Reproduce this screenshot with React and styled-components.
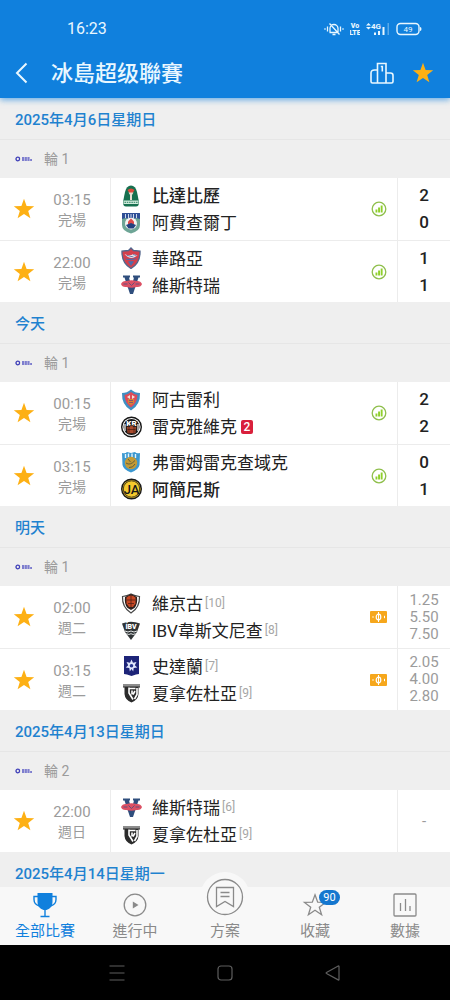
import React from "react";
import styled, { createGlobalStyle } from "styled-components";

const BLUE = "#1080dd";
const LINK = "#1f82cf";
const STAR = "#fdb014";
const GREY = "#9b9b9b";
const FONT = `Roboto, "Noto Sans CJK TC", "Noto Sans CJK SC", sans-serif`;

const GlobalStyle = createGlobalStyle`
  *, *::before, *::after { box-sizing: border-box; }
  body { margin: 0; background: #efefef; font-family: ${FONT}; color: #222; }
  h1, h2, p, ul { margin: 0; padding: 0; }
  ul { list-style: none; }
  svg { display: block; flex: none; }
  button { font: inherit; color: inherit; background: none; border: 0; padding: 0; cursor: pointer; }
`;

const Page = styled.div`
  display: flex;
  flex-direction: column;
  height: 100vh;
`;

/* ---------- header ---------- */

const Header = styled.header`
  position: relative;
  z-index: 1;
  flex: none;
  background: ${BLUE};
  color: #e9f7ff;
  box-shadow: 0 2px 6px rgba(16, 128, 221, 0.6);
`;

const StatusBar = styled.div`
  display: flex;
  align-items: center;
  justify-content: space-between;
  height: 48px;
  padding: 10px 28px 0 67px;
  font-size: 16px;
  line-height: 20px;
`;

const StatusIcons = styled.div`
  display: flex;
  align-items: center;
  gap: 6px;
`;

const TitleBar = styled.div`
  display: flex;
  align-items: center;
  height: 50px;
  padding: 0 16px 0 14px;
`;

const BackButton = styled.button`
  width: 37px;
`;

const Title = styled.h1`
  flex: 1;
  padding-top: 2px;
  font-size: 22px;
  line-height: 32px;
  font-weight: 500;
`;

const HeaderActions = styled.div`
  display: flex;
  align-items: center;
  gap: 18px;
`;

/* ---------- match list ---------- */

const List = styled.main`
  flex: 1;
  min-height: 0;
  overflow-y: auto;
  scrollbar-width: none;
`;

const DateHeading = styled.h2`
  height: 42px;
  padding-left: 15px;
  border-bottom: 1px solid #e6e6e6;
  background: #efefef;
  color: ${LINK};
  font-size: 15px;
  line-height: 44px;
  font-weight: 500;
`;

const Round = styled.p`
  display: flex;
  align-items: center;
  gap: 11px;
  height: 38px;
  padding-left: 15px;
  background: #efefef;
  color: ${GREY};
  font-size: 14px;
  line-height: 20px;
`;

const MatchRow = styled.li`
  display: flex;
  height: 62px;
  background: #fff;

  & + & {
    border-top: 1px solid #ececec;
  }
`;

const StarButton = styled.button`
  display: flex;
  align-items: center;
  justify-content: center;
  width: 48px;
`;

const Kickoff = styled.div`
  display: flex;
  flex-direction: column;
  align-items: center;
  justify-content: center;
  width: 48px;
  margin-right: 14px;
  padding-top: 2px;
  color: ${GREY};
  font-size: 15px;
  line-height: 20px;
`;

const KickoffState = styled.span`
  font-size: 14px;
  line-height: 20px;
`;

const Teams = styled.div`
  flex: 1;
  display: flex;
  flex-direction: column;
  justify-content: center;
  padding-left: 10px;
  border-left: 1px solid #ececec;
`;

const Team = styled.div`
  display: flex;
  align-items: center;
  height: 27px;
  color: #222;
  font-size: 17px;
  line-height: 25px;
  font-weight: ${(p) => (p.$winner ? 500 : 400)};
  white-space: nowrap;
`;

const TeamName = styled.span`
  padding: 2px 0 0 9px;
`;

const Rank = styled.span`
  padding-left: 2px;
  color: #a6a6a6;
  font-size: 12px;
`;

const RedCard = styled.span`
  width: 12px;
  height: 14px;
  margin-left: 4px;
  border-radius: 2px;
  background: #d9203c;
  color: #fff;
  font-size: 12px;
  line-height: 14px;
  font-weight: 500;
  text-align: center;
`;

const InfoButton = styled.button`
  display: flex;
  align-items: center;
  justify-content: center;
  width: 36px;
`;

const Result = styled.div`
  display: flex;
  flex-direction: column;
  align-items: center;
  justify-content: center;
  width: 53px;
  border-left: 1px solid #ececec;
  color: ${(p) => (p.$odds ? GREY : "#222")};
  font-size: ${(p) => (p.$odds ? 15 : 17)}px;
  line-height: ${(p) => (p.$odds ? 17 : 27)}px;
  font-weight: ${(p) => (p.$odds ? 400 : 500)};
`;

/* ---------- bottom bars ---------- */

const TabBar = styled.nav`
  position: relative;
  z-index: 1;
  flex: none;
  display: grid;
  grid-template-columns: repeat(5, 1fr);
  grid-template-rows: 58px;
  background: #f8f8f8;
`;

const Tab = styled.a`
  display: flex;
  flex-direction: column;
  align-items: center;
  justify-content: flex-end;
  gap: 2px;
  padding-bottom: 3px;
  color: ${(p) => (p.$active ? BLUE : "#8a8a8a")};
  font-size: 15px;
  line-height: 22px;
  text-decoration: none;
`;

const TabIcon = styled.span`
  position: relative;
  display: block;
`;

const RaisedIcon = styled.span`
  display: block;
  margin-bottom: -4px;
  padding: 6px;
  border-radius: 50%;
  background: #f8f8f8;
`;

const Badge = styled.span`
  position: absolute;
  left: 17px;
  top: -2px;
  width: 21px;
  height: 15px;
  border-radius: 8px;
  background: #1577cf;
  color: #fff;
  font-size: 11px;
  line-height: 15px;
  text-align: center;
`;

const SystemBar = styled.div`
  flex: none;
  display: flex;
  align-items: center;
  justify-content: center;
  gap: 86px;
  height: 55px;
  background: #000;
  color: #5e5e5e;
`;

/* ---------- icons ---------- */

const StarIcon = ({ size = 22, fill = STAR }) => (
  <svg width={size} height={size} viewBox="0 0 22 22">
    <path
      d="M11 .8l2.6 7.2 7.6.2-6 4.7 2.2 7.4L11 16l-6.4 4.3 2.2-7.4-6-4.7 7.6-.2z"
      fill={fill}
    />
  </svg>
);

const BackIcon = () => (
  <svg width="16" height="22" viewBox="0 0 16 22" fill="none" stroke="currentColor" strokeWidth="2">
    <path d="M12.5 1.5L3 11l9.500 9.500" />
  </svg>
);

const PodiumIcon = () => (
  <svg width="24" height="22" viewBox="0 0 24 22" fill="none" stroke="currentColor" strokeWidth="1.600">
    <path d="M7.500 21V1.500h8.500V21M7.500 8H4.500Q1 8 1 11v8.500q0 1.500 1.500 1.500h19q1.500 0 1.500-1.500v-6q0-2.500-2.500-2.500H16M10.800 4.500h1.500v5" />
  </svg>
);

const MutedBellIcon = () => (
  <svg width="20" height="14" viewBox="0 0 20 14" fill="none" stroke="currentColor" strokeWidth="1.300">
    <path d="M6 10.500V6.500a4 4 0 0 1 8 0v4H5.500M8.500 12.500h3M5.500 1.500l10 11M3.500 4.500v5M16.500 4.500v5M1 6.300v1.400M19 6.300v1.400" />
  </svg>
);

const VolteIcon = () => (
  <svg width="10" height="14" viewBox="0 0 10 14" fill="currentColor" fontFamily="Roboto, sans-serif" fontWeight="900">
    <text x="5" y="6" fontSize="7" textAnchor="middle">Vo</text>
    <text x="5" y="13" fontSize="7" textAnchor="middle">LTE</text>
  </svg>
);

const SignalIcon = () => (
  <svg width="24" height="14" viewBox="0 0 24 14" fill="currentColor">
    <path d="M0 3.500L2.500 1 5 3.500zM0 5l2.500 2.500L5 5z" />
    <text x="5" y="7" fontSize="8" fontWeight="700" fontFamily="Roboto, sans-serif">4G</text>
    <path d="M8 10.500h2V13H8zM12 9h2v4h-2zM16.500 5h2v8h-2z" />
    <path d="M21.500 1H23v12h-1.500z" opacity=".35" />
  </svg>
);

const BatteryIcon = () => (
  <svg width="26" height="14" viewBox="0 0 26 14">
    <rect x="1" y="1.500" width="22" height="11" rx="3.500" fill="none" stroke="currentColor" strokeWidth="1.400" />
    <path d="M24 5q1.500 0 1.500 2T24 9z" fill="currentColor" />
    <text x="12" y="10" fontSize="8" textAnchor="middle" fill="currentColor" fontFamily="Roboto, sans-serif">49</text>
  </svg>
);

const LeagueLogo = () => (
  <svg width="18" height="6" viewBox="0 0 18 6">
    <circle cx="2.800" cy="3" r="1.800" fill="none" stroke="#3f3fb8" strokeWidth="1.300" />
    <path d="M7 2h8M7 4h10" stroke="#5a5ac4" strokeWidth="1.400" strokeDasharray="2.200 .5" />
  </svg>
);

const StatsIcon = () => (
  <svg width="16" height="16" viewBox="0 0 16 16">
    <circle cx="8" cy="8" r="6.800" fill="none" stroke="#8fbf4c" strokeWidth="1.300" />
    <path d="M4.500 8.500h1.900v3H4.500zM7.100 6.500H9v5H7.100zM9.700 4.500h1.900v7H9.700z" fill="#8fd02c" />
  </svg>
);

const TicketIcon = () => (
  <svg width="18" height="12" viewBox="0 0 18 12">
    <rect x="0" y="0" width="17" height="12" rx="1" fill="#f6a71c" />
    <ellipse cx="8.500" cy="6" rx="2.300" ry="2.800" fill="none" stroke="#fff" strokeWidth="1.200" />
    <path d="M8.500 1v10M3 5.200v1.600M14.500 4.800v2.400" stroke="#fff" strokeWidth="1" />
  </svg>
);

const TrophyIcon = () => (
  <svg width="26" height="26" viewBox="0 0 26 26" fill="none" stroke="currentColor">
    <path d="M5.500 1h15v9q0 6-6 8h-3q-6-2-6-8z" fill="currentColor" stroke="none" />
    <path d="M6 4.500H2v3q0 5 5.500 6.500M20 4.500h4v3q0 5-5.500 6.500M13 17v7M8.500 24.500h9" strokeWidth="1.400" />
  </svg>
);

const LiveIcon = () => (
  <svg width="26" height="26" viewBox="0 0 26 26">
    <circle cx="13" cy="13" r="10.800" fill="none" stroke="currentColor" strokeWidth="1.300" />
    <path d="M10.800 9.500l5.700 3.500-5.700 3.500z" fill="currentColor" />
  </svg>
);

const PlanIcon = () => (
  <svg width="38" height="38" viewBox="0 0 38 38" fill="none" stroke="currentColor" strokeWidth="1.300">
    <circle cx="19" cy="19" r="17.500" />
    <path d="M10.500 9.500h17v19l-8.500-5-8.500 5zM14.500 14.500h9M14.500 18.500h9" />
  </svg>
);

const OutlineStarIcon = () => (
  <svg width="26" height="26" viewBox="0 0 26 26" fill="none" stroke="currentColor" strokeWidth="1.300">
    <path d="M13 2.800l2.700 7.400 7.800.2-6.200 4.800 2.300 7.500-6.600-4.400-6.600 4.400 2.300-7.500-6.200-4.800 7.800-.2z" />
  </svg>
);

const DataIcon = () => (
  <svg width="26" height="26" viewBox="0 0 26 26" fill="none" stroke="currentColor" strokeWidth="1.300">
    <rect x="2" y="2" width="22" height="22" rx="1" />
    <path d="M8.500 11v8M13.500 7v12M18 14v5" />
  </svg>
);

const MenuIcon = () => (
  <svg width="22" height="22" viewBox="0 0 22 22" stroke="currentColor" strokeWidth="1.200">
    <path d="M3.500 4h15M3.500 11h15M3.500 18h15" />
  </svg>
);

const HomeIcon = () => (
  <svg width="22" height="22" viewBox="0 0 22 22" fill="none" stroke="currentColor" strokeWidth="1.200">
    <rect x="4" y="4" width="14" height="14" rx="3" />
  </svg>
);

const ReturnIcon = () => (
  <svg width="22" height="22" viewBox="0 0 22 22" fill="none" stroke="currentColor" strokeWidth="1.200">
    <path d="M17 4.500v13q0 .8-.8.400L4.500 11.500q-.8-.5 0-1L16.200 4q.8-.4.8.5z" />
  </svg>
);

/* ---------- club crests ---------- */

const crestArt = {
  breidablik: (
    <>
      <path d="M10 .5q4.500 0 6 6.500l2 10q0 4.500-3 4.500H5q-3 0-3-4.500L4 7Q5.500.5 10 .5z" fill="#17704f" />
      <path d="M6.500 5q3.500-3 7 0l-2.500 4H9z" fill="#df4a3c" />
      <path d="M7.500 7.500h5L11 10v5H9v-5z" fill="#e6ded1" />
      <path d="M2.500 15.500h15v3.500h-15z" fill="#cfeadb" />
      <path d="M3.500 17.300h13" stroke="#2d8062" strokeWidth="1" strokeDasharray="1.500 .8" />
    </>
  ),
  afturelding: (
    <>
      <path d="M1 1h18v12q0 6-9 8.500Q1 19 1 13z" fill="#6ea596" />
      <path d="M1 1h18v6l-4-1-5 2-5-2-4 1z" fill="#2f4f96" />
      <path d="M4.500 2v4M7.500 2v4M10 2v3M12.500 2v4M15.500 2v4" stroke="#dfe8f5" strokeWidth=".9" />
      <circle cx="10" cy="11.500" r="6" fill="#f4f4f2" />
      <path d="M7 9.500l3-3 3 3v3H7z" fill="#dd4b4b" />
      <path d="M5 13l5-2 5 2-2.500 3.500h-5z" fill="#22417f" />
    </>
  ),
  valur: (
    <>
      <path d="M10 1l2.500 2.500L19 4q.5 12-9 17.500Q.5 16 1 4l6.500-.5z" fill="#d3404d" stroke="#52668c" strokeWidth="1.300" />
      <path d="M3.500 7q5 2.500 9 0l4 1.500-4.500 2.500q-5 .5-8.500-4z" fill="#ece5ec" />
      <path d="M5.500 8.200l7 1.800M12 7.500l3.500 1" stroke="#5d6fa3" strokeWidth=".9" />
      <path d="M4.500 12q5.500 2 11-.5M7.500 14.500l2.500 4 2.500-4z" fill="#4b6dac" stroke="#4b6dac" strokeWidth=".6" />
    </>
  ),
  vestri: (
    <>
      <path d="M2 1.500h7v2H8L10.500 13 13 3.500h-1v-2h7v2h-1.500L12 20H9L3.500 3.500H2z" fill="#2f4e7d" />
      <path d="M0 10Q1.500 6.500 5.500 7q5-1.500 10 0 4-.5 5.500 3-1 3.500-5.500 3-5 1.500-10 0Q1 13.500 0 10z" fill="#dc5064" />
      <path d="M2.500 10h4M7.500 8.500l3 3 3-3M14.500 10h4" stroke="#64507c" strokeWidth="1" fill="none" />
    </>
  ),
  akureyri: (
    <>
      <path d="M10 .5q4 3.500 9 3.500.5 12-9 17.500Q.5 16 1 4q5 0 9-3.500z" fill="#3f8fc2" />
      <path d="M10 3q3 2.500 6.500 3Q16 14.500 10 18.500 4 14.500 3.500 6 7 5.500 10 3z" fill="#dd4c58" />
      <path d="M6 8l3-2v4zM14 8l-3-2v4z" fill="#f1e3dc" />
      <path d="M7 10h6v4l-3 2-3-2z" fill="#d88431" />
      <path d="M8 11.500h4M8 13.500h4" stroke="#71497c" strokeWidth=".8" />
    </>
  ),
  kr: (
    <>
      <circle cx="10.500" cy="11" r="9.800" fill="#fff" stroke="#171717" strokeWidth="1.400" />
      <circle cx="10.500" cy="11" r="8" fill="#171717" />
      <path d="M4 8v7M17 8v7" stroke="#fff" strokeWidth="1.200" />
      <text x="10.500" y="9.500" fontSize="8" fontWeight="900" fill="#fff" textAnchor="middle" fontFamily="Roboto, sans-serif">KR</text>
      <path d="M5.500 10.500H9v-1h3v1h3.500l-.8 7H6.300z" fill="#a8492b" stroke="#171717" strokeWidth=".6" />
      <path d="M6.500 13.500h8M8 11v6M13 11v6" stroke="#42180e" strokeWidth=".7" />
    </>
  ),
  fram: (
    <>
      <path d="M1 2q3.500 1 5-1l4 1 4-1q1.500 2 5 1l-.5 12q-1 5-8.500 7.500Q2.500 19 1.500 14z" fill="#3b98d1" />
      <path d="M4.500 3v4M7.500 2.500v4M11 2.500v4M14.500 3v4" stroke="#e3f3fb" strokeWidth="1.400" />
      <circle cx="10" cy="12" r="6.200" fill="#c39a35" />
      <path d="M5 12q4 3 9-2.500M8 16.500q4 .5 6-3.500M7 8l2.500 3" stroke="#615f3e" strokeWidth="1" fill="none" />
    </>
  ),
  ia: (
    <>
      <circle cx="10.500" cy="11" r="9.800" fill="#f5c92c" stroke="#191919" strokeWidth="1.400" />
      <circle cx="10.500" cy="11" r="8.200" fill="none" stroke="#191919" strokeWidth=".8" />
      <text x="10.500" y="15.500" fontSize="13" fill="#191919" textAnchor="middle" fontWeight="500" fontFamily="Roboto, sans-serif">JA</text>
    </>
  ),
  vikingur: (
    <>
      <path d="M1.500 3.500Q6 3 10 1q4 2 8.500 2.500.5 11-8.500 16.500Q1 14.500 1.500 3.500z" fill="#fff" stroke="#454545" strokeWidth="1.200" />
      <path d="M4 4l6-3 6 3q1 7-2.500 11L10 17l-3.500-2Q3 11 4 4z" fill="#30201c" />
      <path d="M5.500 4.500q4.500-4 9 0v6L12 14H8l-2.500-3.500z" fill="#c74824" />
      <path d="M10 2v12M6 7h8M7 10.500h6" stroke="#572015" strokeWidth=".8" />
    </>
  ),
  ibv: (
    <>
      <path d="M1 3.500Q10 0 19 3.500l-3 8.500-6 8-6-8z" fill="#303436" />
      <text x="10" y="9" fontSize="7" fontWeight="900" fill="#fff" textAnchor="middle" fontFamily="Roboto, sans-serif">ÍBV</text>
      <path d="M4 11q3 2 6 0 3 2 6 0M5.500 13.700q2.500 1.600 4.500 0 2 1.600 4.500 0" fill="none" stroke="#e2e6e6" strokeWidth="1" />
    </>
  ),
  stjarnan: (
    <>
      <path d="M3 1h15v18l-3 .5-4.500 1.500L6 19.500 3 19z" fill="#1d2478" />
      <path d="M10.500 4.500L12 7.800l3.500-.8-1.700 3.200 2.500 2.300-3.600.5-.5 3.500-1.700-2.500-1.700 2.500-.5-3.500-3.600-.5 2.500-2.300L5.500 7l3.500.8z" fill="#dfe6fb" />
      <circle cx="10.500" cy="10.800" r="1.800" fill="#27368e" />
    </>
  ),
  fh: (
    <>
      <path d="M2 2h17v3.500h-1.500V12q-.5 6-7 8.500Q4 18 3.500 12V5.500H2z" fill="#2b2b2b" />
      <path d="M2 2h17v2.500H2z" fill="#8d8d8d" />
      <path d="M8 5.500v5.500l4 6.500M8 6.500h6.500M11 8.500v4M16 6v6.500L13.500 17M14 9l-2 3.500" fill="none" stroke="#fff" strokeWidth="1.600" />
    </>
  ),
};

const Crest = ({ club }) => (
  <svg width="22" height="22" viewBox="0 0 22 22">
    {crestArt[club]}
  </svg>
);

/* ---------- data ---------- */

const days = [
  {
    date: "2025年4月6日星期日",
    round: "輪 1",
    matches: [
      {
        time: "03:15",
        state: "完場",
        info: "stats",
        result: ["2", "0"],
        teams: [
          { name: "比達比歷", club: "breidablik", winner: true },
          { name: "阿費查爾丁", club: "afturelding" },
        ],
      },
      {
        time: "22:00",
        state: "完場",
        info: "stats",
        result: ["1", "1"],
        teams: [
          { name: "華路亞", club: "valur" },
          { name: "維斯特瑞", club: "vestri" },
        ],
      },
    ],
  },
  {
    date: "今天",
    round: "輪 1",
    matches: [
      {
        time: "00:15",
        state: "完場",
        info: "stats",
        result: ["2", "2"],
        teams: [
          { name: "阿古雷利", club: "akureyri" },
          { name: "雷克雅維克", club: "kr", red: 2 },
        ],
      },
      {
        time: "03:15",
        state: "完場",
        info: "stats",
        result: ["0", "1"],
        teams: [
          { name: "弗雷姆雷克查域克", club: "fram" },
          { name: "阿簡尼斯", club: "ia", winner: true },
        ],
      },
    ],
  },
  {
    date: "明天",
    round: "輪 1",
    matches: [
      {
        time: "02:00",
        state: "週二",
        info: "ticket",
        odds: true,
        result: ["1.25", "5.50", "7.50"],
        teams: [
          { name: "維京古", club: "vikingur", rank: 10 },
          { name: "IBV韋斯文尼查", club: "ibv", rank: 8 },
        ],
      },
      {
        time: "03:15",
        state: "週二",
        info: "ticket",
        odds: true,
        result: ["2.05", "4.00", "2.80"],
        teams: [
          { name: "史達蘭", club: "stjarnan", rank: 7 },
          { name: "夏拿佐杜亞", club: "fh", rank: 9 },
        ],
      },
    ],
  },
  {
    date: "2025年4月13日星期日",
    round: "輪 2",
    matches: [
      {
        time: "22:00",
        state: "週日",
        odds: true,
        result: ["-"],
        teams: [
          { name: "維斯特瑞", club: "vestri", rank: 6 },
          { name: "夏拿佐杜亞", club: "fh", rank: 9 },
        ],
      },
    ],
  },
  { date: "2025年4月14日星期一", matches: [] },
];

const Match = ({ match }) => (
  <MatchRow>
    <StarButton type="button" aria-label="收藏">
      <StarIcon />
    </StarButton>
    <Kickoff>
      <span>{match.time}</span>
      <KickoffState>{match.state}</KickoffState>
    </Kickoff>
    <Teams>
      {match.teams.map((team) => (
        <Team key={team.name} $winner={team.winner}>
          <Crest club={team.club} />
          <TeamName>{team.name}</TeamName>
          {team.rank && <Rank>[{team.rank}]</Rank>}
          {team.red && <RedCard>{team.red}</RedCard>}
        </Team>
      ))}
    </Teams>
    {match.info && (
      <InfoButton type="button" aria-label={match.info === "stats" ? "數據" : "方案"}>
        {match.info === "stats" ? <StatsIcon /> : <TicketIcon />}
      </InfoButton>
    )}
    <Result $odds={match.odds}>
      {match.result.map((value, i) => (
        <span key={i}>{value}</span>
      ))}
    </Result>
  </MatchRow>
);

export default function App() {
  return (
    <Page>
      <GlobalStyle />
      <Header>
        <StatusBar>
          <span>16:23</span>
          <StatusIcons>
            <MutedBellIcon />
            <VolteIcon />
            <SignalIcon />
            <BatteryIcon />
          </StatusIcons>
        </StatusBar>
        <TitleBar>
          <BackButton type="button" aria-label="返回">
            <BackIcon />
          </BackButton>
          <Title>冰島超级聯賽</Title>
          <HeaderActions>
            <button type="button" aria-label="排名">
              <PodiumIcon />
            </button>
            <button type="button" aria-label="收藏">
              <StarIcon />
            </button>
          </HeaderActions>
        </TitleBar>
      </Header>

      <List>
        {days.map((day) => (
          <section key={day.date}>
            <DateHeading>{day.date}</DateHeading>
            {day.round && (
              <Round>
                <LeagueLogo />
                {day.round}
              </Round>
            )}
            <ul>
              {day.matches.map((match) => (
                <Match key={match.teams[0].name} match={match} />
              ))}
            </ul>
          </section>
        ))}
      </List>

      <TabBar>
        <Tab href="#all" $active>
          <TrophyIcon />
          全部比賽
        </Tab>
        <Tab href="#live">
          <LiveIcon />
          進行中
        </Tab>
        <Tab href="#plans">
          <RaisedIcon>
            <PlanIcon />
          </RaisedIcon>
          方案
        </Tab>
        <Tab href="#favourites">
          <TabIcon>
            <OutlineStarIcon />
            <Badge>90</Badge>
          </TabIcon>
          收藏
        </Tab>
        <Tab href="#data">
          <DataIcon />
          數據
        </Tab>
      </TabBar>

      <SystemBar>
        <button type="button" aria-label="選單">
          <MenuIcon />
        </button>
        <button type="button" aria-label="主畫面">
          <HomeIcon />
        </button>
        <button type="button" aria-label="返回上一頁">
          <ReturnIcon />
        </button>
      </SystemBar>
    </Page>
  );
}
